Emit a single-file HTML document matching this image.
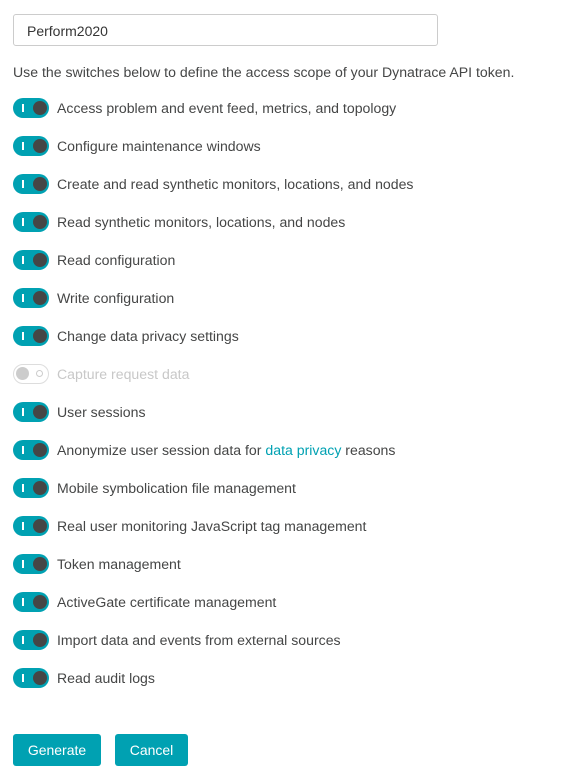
<!DOCTYPE html>
<html><head><style>
body{margin:0;background:#fff;font-family:"Liberation Sans",sans-serif;color:#454646;font-size:14.1px;}
.inp{position:absolute;left:13px;top:14px;width:423px;height:30px;border:1px solid #ccc;border-radius:3px;box-sizing:content-box;}
.inp span{position:absolute;left:13px;top:8px;font-size:14px;color:#353535}
.desc{position:absolute;left:13px;top:64px;}
.row{position:absolute;left:13px;height:20px;}
.tg{position:absolute;left:0;top:0;width:36px;height:20px;border-radius:10px;background:#00a1b2;}
.tg:before{content:"";position:absolute;left:9px;top:6px;width:1.5px;height:8px;background:#fff}
.tg:after{content:"";position:absolute;left:20px;top:3px;width:14px;height:14px;border-radius:50%;background:#454646}
.off{background:#fff;border:1.5px solid #ddd;box-sizing:border-box}
.off:before{left:2px;top:2px;width:13px;height:13px;border-radius:50%;background:#ccc}
.off:after{left:22px;top:5px;width:5px;height:5px;border:1.5px solid #ccc;background:#fff}
.lb{position:absolute;left:44px;top:2px;white-space:nowrap}
.dis{color:#c8c8c8}
a{color:#00a1b2;text-decoration:none}
.btn{position:absolute;top:734px;height:32px;background:#00a1b2;color:#fff;border-radius:3px;font-size:14px;line-height:32px;text-align:center}
</style></head><body>
<div class="inp"><span>Perform2020</span></div>
<div class="desc">Use the switches below to define the access scope of your Dynatrace API token.</div>
<div class="row" style="top:98px"><div class="tg"></div><div class="lb">Access problem and event feed, metrics, and topology</div></div>
<div class="row" style="top:136px"><div class="tg"></div><div class="lb">Configure maintenance windows</div></div>
<div class="row" style="top:174px"><div class="tg"></div><div class="lb">Create and read synthetic monitors, locations, and nodes</div></div>
<div class="row" style="top:212px"><div class="tg"></div><div class="lb">Read synthetic monitors, locations, and nodes</div></div>
<div class="row" style="top:250px"><div class="tg"></div><div class="lb">Read configuration</div></div>
<div class="row" style="top:288px"><div class="tg"></div><div class="lb">Write configuration</div></div>
<div class="row" style="top:326px"><div class="tg"></div><div class="lb">Change data privacy settings</div></div>
<div class="row" style="top:364px"><div class="tg off"></div><div class="lb dis">Capture request data</div></div>
<div class="row" style="top:402px"><div class="tg"></div><div class="lb">User sessions</div></div>
<div class="row" style="top:440px"><div class="tg"></div><div class="lb">Anonymize user session data for <a>data privacy</a> reasons</div></div>
<div class="row" style="top:478px"><div class="tg"></div><div class="lb">Mobile symbolication file management</div></div>
<div class="row" style="top:516px"><div class="tg"></div><div class="lb">Real user monitoring JavaScript tag management</div></div>
<div class="row" style="top:554px"><div class="tg"></div><div class="lb">Token management</div></div>
<div class="row" style="top:592px"><div class="tg"></div><div class="lb">ActiveGate certificate management</div></div>
<div class="row" style="top:630px"><div class="tg"></div><div class="lb">Import data and events from external sources</div></div>
<div class="row" style="top:668px"><div class="tg"></div><div class="lb">Read audit logs</div></div>
<div class="btn" style="left:13px;width:88px">Generate</div>
<div class="btn" style="left:115px;width:73px">Cancel</div>
</body></html>
